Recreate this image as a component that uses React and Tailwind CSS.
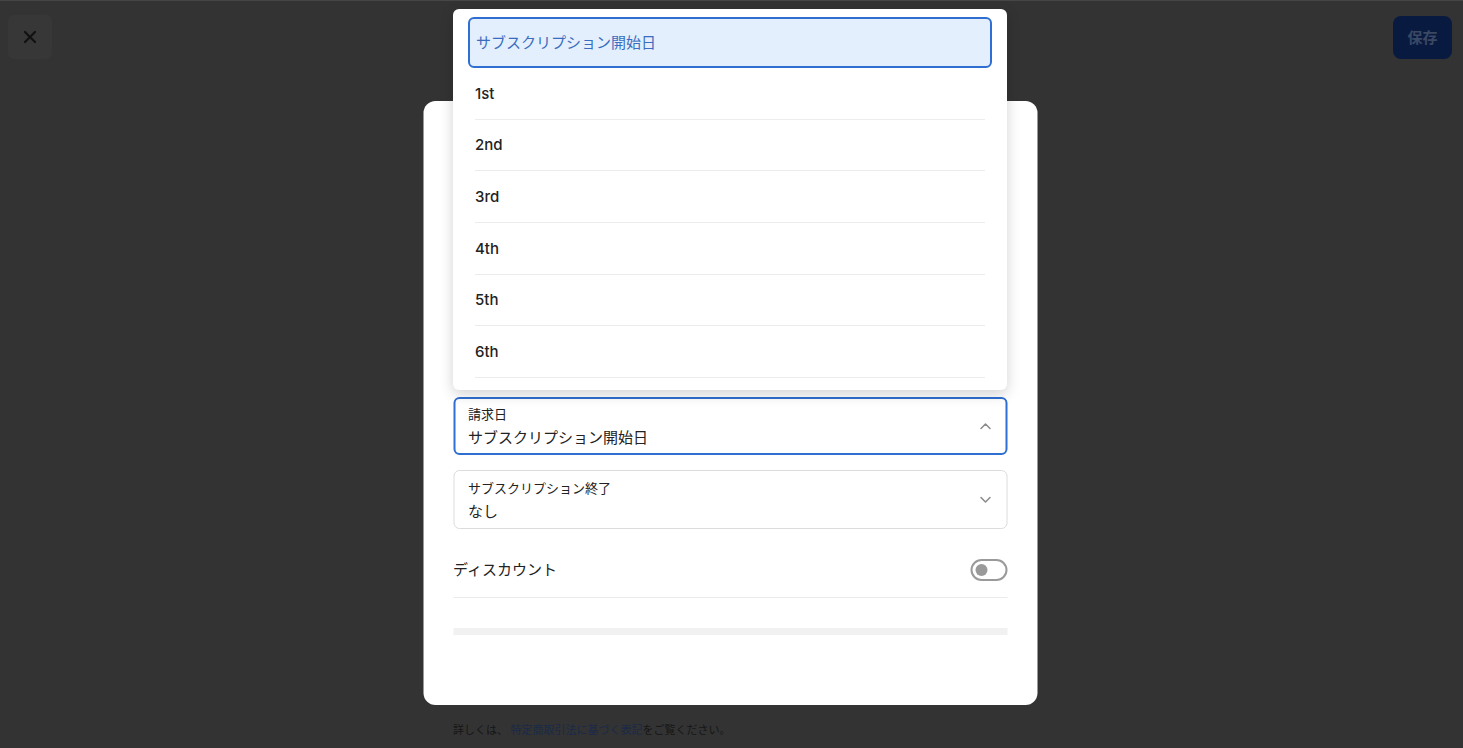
import React from "react";

const jp = { fontFamily: '"Noto Sans CJK JP", "Noto Sans", sans-serif' };
const lat = { fontFamily: 'Inter, "Noto Sans CJK JP", sans-serif' };

function Chevron({ up }) {
  return (
    <svg width="14" height="14" viewBox="0 0 14 14" fill="none" stroke="#8a8a8a" strokeWidth="1.5" strokeLinecap="round" strokeLinejoin="round">
      {up ? <path d="M2.5 9.5 L7 5 L11.5 9.5" /> : <path d="M2.5 4.5 L7 9 L11.5 4.5" />}
    </svg>
  );
}

const items = ["1st", "2nd", "3rd", "4th", "5th", "6th"];

export default function App() {
  return (
    <div className="relative h-[748px] w-full overflow-hidden bg-[#333333] border-t border-[#464646]" style={jp}>
      <div className="flex items-start justify-between px-[8px] pt-[14px] pr-[11px]">
        <button className="flex h-[44px] w-[44px] items-center justify-center rounded-md bg-[#373737]">
          <svg width="16" height="16" viewBox="0 0 16 16" fill="none" stroke="#111" strokeWidth="2.2" strokeLinecap="round">
            <path d="M3 3 L13 13 M13 3 L3 13" />
          </svg>
        </button>
        <button className="mt-[1px] flex h-[43px] w-[59px] items-center justify-center rounded-lg bg-[#091a40] text-[15px] font-bold text-[#3a4864]">
          保存
        </button>
      </div>

      <div className="mx-auto mt-[42px] w-[614px] -translate-x-[1.5px] rounded-xl bg-white px-[30px] pt-[296px] pb-[70px]">
        <div className="flex h-[58px] items-center justify-between rounded-md border-2 border-[#2f6fd1] pl-[13px] pr-[13px]">
          <div className="flex flex-col">
            <span className="text-[13px] leading-[16px] text-[#222]">請求日</span>
            <span className="mt-[6px] text-[15px] leading-[18px] text-[#222]">サブスクリプション開始日</span>
          </div>
          <Chevron up />
        </div>
        <div className="mt-[15px] flex h-[59px] items-center justify-between rounded-md border border-[#dcdcdc] pl-[14px] pr-[14px]">
          <div className="flex flex-col">
            <span className="text-[13px] leading-[16px] text-[#222]">サブスクリプション終了</span>
            <span className="mt-[6px] text-[15px] leading-[18px] text-[#222]">なし</span>
          </div>
          <Chevron />
        </div>
        <div className="mt-[13px] flex h-[56px] items-center justify-between border-b border-[#ebebeb]">
          <span className="text-[15px] text-[#222]">ディスカウント</span>
          <div className="flex h-[22px] w-[37px] items-center rounded-full border-2 border-[#9a9a9a] bg-white pl-[3px]">
            <div className="h-[12px] w-[12px] rounded-full bg-[#9a9a9a]" />
          </div>
        </div>
        <div className="mt-[30px] h-[7px] bg-[#f1f1f1]" />
      </div>

      <div className="mx-auto mt-[16px] w-[614px] -translate-x-[1.5px] pl-[30px] text-[11px] text-[#161616]">
        詳しくは、 <span className="text-[#1a2a48]">特定商取引法に基づく表記</span>をご覧ください。
      </div>

      <div className="absolute left-[453px] top-[8px] w-[554px] rounded-md bg-white px-[15px] pt-[8px] shadow-[0_4px_14px_rgba(0,0,0,0.18)]">
        <div className="flex h-[51px] items-center rounded-md border-2 border-[#2f6fd1] bg-[#e3effd] pl-[6px] text-[15px] text-[#3a6dbf]">
          サブスクリプション開始日
        </div>
        <div className="px-[7px]">
          {items.map((t) => (
            <div key={t} className="flex h-[51.7px] items-center border-b border-[#ececec] pt-[1px] text-[15px] font-medium text-[#222]" style={lat}>
              {t}
            </div>
          ))}
        </div>
        <div className="h-[12px]" />
      </div>
    </div>
  );
}
